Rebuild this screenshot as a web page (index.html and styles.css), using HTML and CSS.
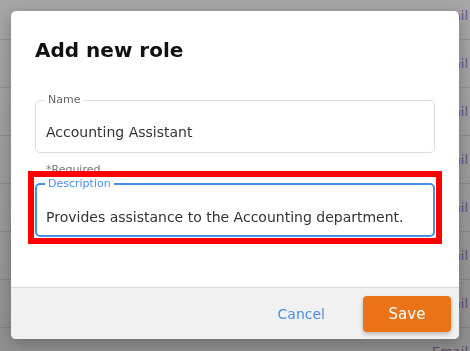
FILE: index.html
```html
<!DOCTYPE html>
<html lang="en">
<head>
<meta charset="utf-8">
<title>Add new role</title>
<link rel="stylesheet" href="styles.css">
</head>
<body>
<div class="page">
  <ul class="rows">
    <li class="row"><span>Email</span></li>
    <li class="row"><span>Email</span></li>
    <li class="row"><span>Email</span></li>
    <li class="row"><span>Email</span></li>
    <li class="row"><span>Email</span></li>
    <li class="row"><span>Email</span></li>
    <li class="row"><span>Email</span></li>
    <li class="row"><span>Email</span></li>
  </ul>
</div>
<div class="overlay"></div>
<div class="modal" role="dialog" aria-labelledby="modal-title">
  <div class="modal-body">
    <h1 id="modal-title" class="modal-title">Add new role</h1>
    <fieldset class="field">
      <legend class="field-label">Name</legend>
      <div class="field-value">Accounting Assistant</div>
    </fieldset>
    <div class="hint">*Required</div>
    <div class="highlight">
      <fieldset class="field field-focused">
        <legend class="field-label">Description</legend>
        <div class="field-value">Provides assistance to the Accounting department.</div>
      </fieldset>
    </div>
  </div>
  <div class="modal-footer">
    <button class="btn-cancel" type="button">Cancel</button>
    <button class="btn-save" type="button">Save</button>
  </div>
</div>
</body>
</html>
```
FILE: styles.css
```css
* { box-sizing: border-box; }
html, body { margin: 0; padding: 0; }
body {
  width: 470px;
  height: 351px;
  overflow: hidden;
  background: #fff;
  font-family: "DejaVu Sans", Verdana, sans-serif;
}
.page {
  width: 470px;
  height: 351px;
  overflow: hidden;
}
.rows {
  list-style: none;
  margin: -8px 0 0 0;
  padding: 0;
}
.row {
  height: 48px;
  border-bottom: 1px solid #e4e4e4;
  display: flex;
  align-items: center;
  justify-content: flex-end;
  padding-right: 2px;
  font-size: 13px;
  color: #b07cc8;
}
.overlay {
  position: fixed;
  inset: 0;
  background: linear-gradient(to bottom, rgba(0,0,0,0.35), rgba(0,0,0,0.44));
}
.modal {
  position: absolute;
  left: 11px;
  top: 11px;
  width: 448px;
  height: 328px;
  background: #fff;
  border-radius: 5px;
  display: flex;
  flex-direction: column;
  overflow: hidden;
  box-shadow: 0 4px 14px rgba(0,0,0,0.25);
}
.modal-body {
  flex: 1;
  padding: 27px 24px 0 24px;
}
.modal-title {
  margin: 0 0 32px 0;
  font-size: 20px;
  line-height: 24px;
  font-weight: bold;
  color: #111;
}
.field {
  margin: 0;
  padding: 2px 10px 0 10px;
  height: 59px;
  border: 1px solid #dcdcdc;
  border-radius: 5px;
  min-width: 0;
}
.field-label {
  padding: 0 3px;
  margin-left: -1px;
  font-size: 11px;
  line-height: 12px;
  color: #666;
}
.field-value {
  font-size: 14px;
  line-height: 20px;
  padding-top: 14px;
  color: #333;
  white-space: nowrap;
}
.hint {
  position: relative;
  font-size: 11px;
  line-height: 13px;
  color: #777;
  padding: 10px 0 0 11px;
  height: 18px;
}
.highlight {
  position: relative;
  margin: 0 -7px;
  border: 6px solid #ff0000;
  padding: 1px;
}
.field-focused {
  border: 2px solid #4a8fe7;
  padding-left: 9px;
}
.field-focused .field-label { color: #4a8fe7; }
.field-focused .field-value { padding-top: 15px; }
.modal-footer {
  height: 52px;
  flex: none;
  background: #f1f1f1;
  border-top: 1px solid #dadada;
  display: flex;
  align-items: center;
  justify-content: flex-end;
  padding: 0 8px 0 0;
  gap: 24px;
}
.btn-cancel {
  background: none;
  border: 0;
  padding: 0 14px;
  font-family: inherit;
  font-size: 14px;
  color: #4a8fe7;
  cursor: pointer;
}
.btn-save {
  width: 88px;
  height: 36px;
  border: 0;
  border-radius: 4px;
  background: #e97316;
  color: #fff;
  font-family: inherit;
  font-size: 15px;
  box-shadow: 0 2px 4px rgba(0,0,0,0.25);
  cursor: pointer;
}
```
